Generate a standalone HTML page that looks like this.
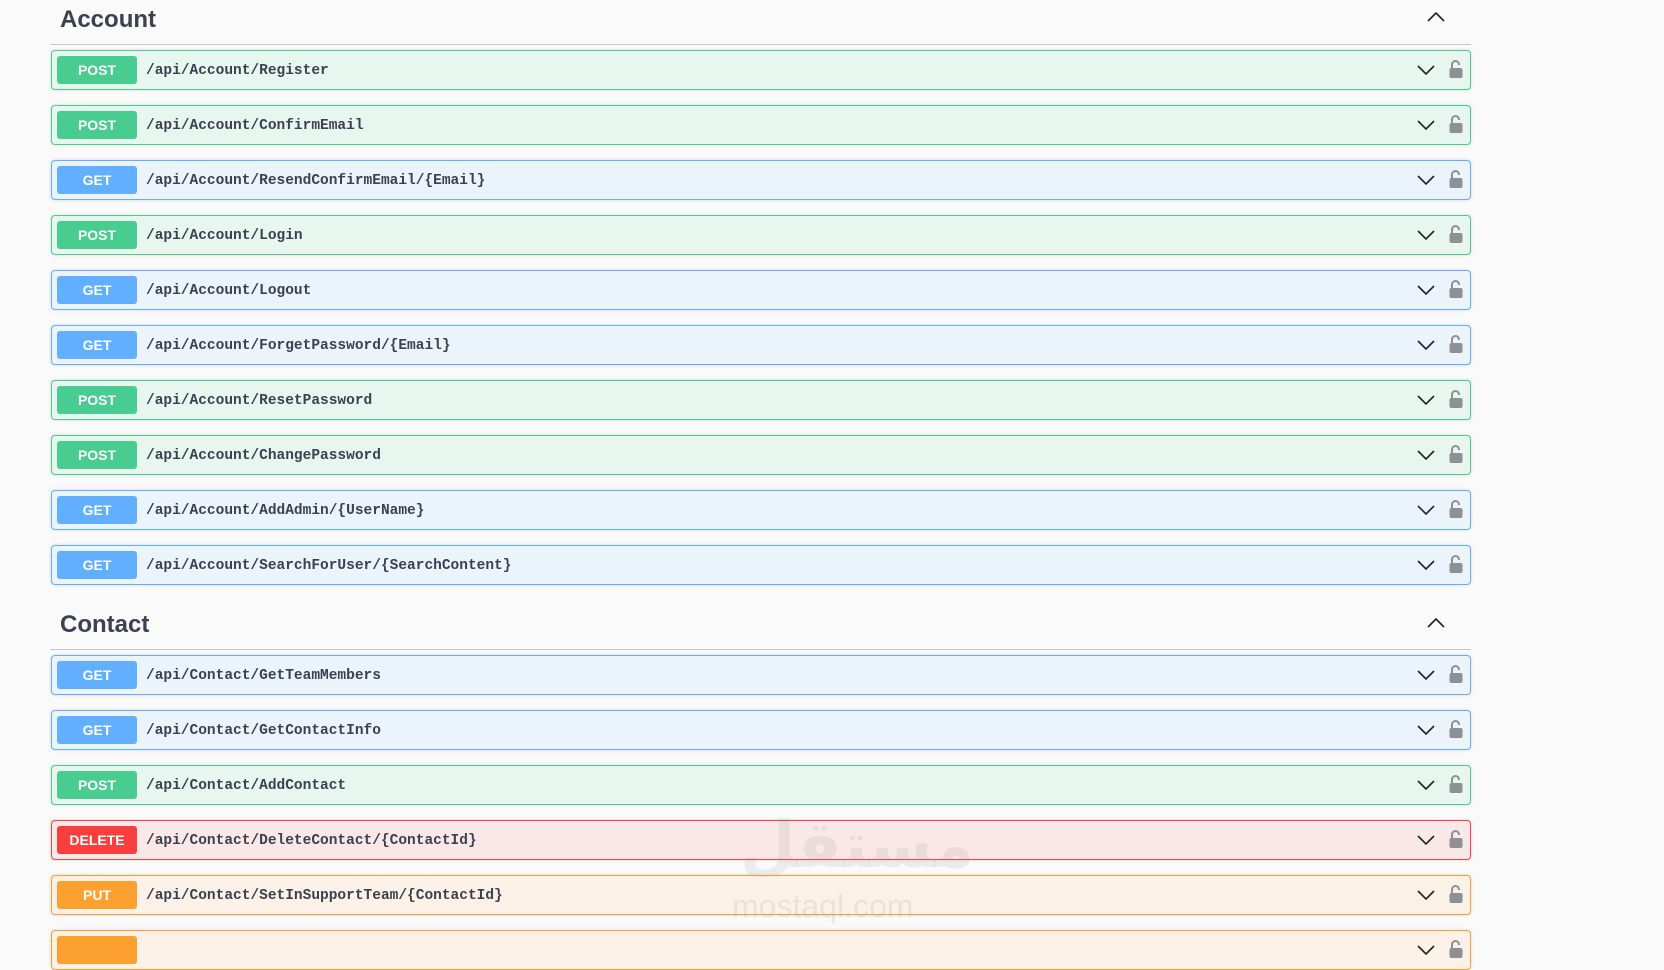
<!DOCTYPE html>
<html><head><meta charset="utf-8"><style>
*{margin:0;padding:0;box-sizing:border-box}
body{width:1664px;height:943px;background:#fafafa;position:relative;overflow:hidden;font-family:"Liberation Sans",sans-serif;color:#3b4151}
.h{position:absolute;left:60px;font-size:24px;font-weight:bold;color:#3b4151}
.line{position:absolute;left:50px;width:1421px;height:1px;background:#c4c6cc}
.up{position:absolute;left:1426px}
.row{position:absolute;left:51px;width:1420px;height:40px;border:1px solid;border-radius:4px;box-shadow:0 0 3px rgba(0,0,0,.15)}
.b{position:absolute;left:5px;top:5px;width:80px;height:28px;border-radius:3px;color:#fff;font-weight:bold;font-size:14px;text-align:center;line-height:28px}
.p{position:absolute;left:94px;top:0;line-height:40px;font-family:"Liberation Mono",monospace;font-weight:bold;font-size:14.5px;color:#3b4151}
.ch{position:absolute;left:1364px;top:12px}
.lk{position:absolute;left:1396px;top:8px}
.post{background:#e8f6f0;border-color:#49cc90}.post .b{background:#49cc90}
.get{background:#ebf3fb;border-color:#61affe}.get .b{background:#61affe}
.del{background:#fae7e7;border-color:#f93e3e}.del .b{background:#f93e3e}
.put{background:#fbf1e6;border-color:#fca130}.put .b{background:#fca130}
.wm{position:absolute;left:732px;top:888px;font-size:32px;color:rgba(150,150,150,.16)}
.wa{position:absolute;left:740px;top:808px;font-size:64px;font-weight:bold;color:rgba(150,150,150,.14);font-family:"Liberation Sans","DejaVu Sans",sans-serif}
</style></head><body>
<div class="h" style="top:6px">Account</div>
<svg class="up" style="top:10px" width="20" height="14" viewBox="0 0 20 14"><path d="M2 11 L10 3 L18 11" fill="none" stroke="#222" stroke-width="1.6"/></svg>
<div class="line" style="top:44px"></div>
<div class="h" style="top:611px">Contact</div>
<svg class="up" style="top:616px" width="20" height="14" viewBox="0 0 20 14"><path d="M2 11 L10 3 L18 11" fill="none" stroke="#222" stroke-width="1.6"/></svg>
<div class="line" style="top:649px"></div>

<div class="row post" style="top:50px"><div class="b">POST</div><div class="p">/api/Account/Register</div></div>
<div class="row post" style="top:105px"><div class="b">POST</div><div class="p">/api/Account/ConfirmEmail</div></div>
<div class="row get" style="top:160px"><div class="b">GET</div><div class="p">/api/Account/ResendConfirmEmail/{Email}</div></div>
<div class="row post" style="top:215px"><div class="b">POST</div><div class="p">/api/Account/Login</div></div>
<div class="row get" style="top:270px"><div class="b">GET</div><div class="p">/api/Account/Logout</div></div>
<div class="row get" style="top:325px"><div class="b">GET</div><div class="p">/api/Account/ForgetPassword/{Email}</div></div>
<div class="row post" style="top:380px"><div class="b">POST</div><div class="p">/api/Account/ResetPassword</div></div>
<div class="row post" style="top:435px"><div class="b">POST</div><div class="p">/api/Account/ChangePassword</div></div>
<div class="row get" style="top:490px"><div class="b">GET</div><div class="p">/api/Account/AddAdmin/{UserName}</div></div>
<div class="row get" style="top:545px"><div class="b">GET</div><div class="p">/api/Account/SearchForUser/{SearchContent}</div></div>
<div class="row get" style="top:655px"><div class="b">GET</div><div class="p">/api/Contact/GetTeamMembers</div></div>
<div class="row get" style="top:710px"><div class="b">GET</div><div class="p">/api/Contact/GetContactInfo</div></div>
<div class="row post" style="top:765px"><div class="b">POST</div><div class="p">/api/Contact/AddContact</div></div>
<div class="row del" style="top:820px"><div class="b">DELETE</div><div class="p">/api/Contact/DeleteContact/{ContactId}</div></div>
<div class="row put" style="top:875px"><div class="b">PUT</div><div class="p">/api/Contact/SetInSupportTeam/{ContactId}</div></div>
<div class="row put" style="top:930px"><div class="b"></div></div>
<div class="wa">مستقل</div>
<div class="wm">mostaql.com</div>
<script>
document.querySelectorAll('.row').forEach(r=>{
r.insertAdjacentHTML('beforeend','<svg class="ch" width="20" height="14" viewBox="0 0 20 14"><path d="M2 3 L10 11 L18 3" fill="none" stroke="#222" stroke-width="1.6"/></svg><svg class="lk" width="16" height="20" viewBox="0 0 16 20"><path d="M4 9 V5.5 A3.5 3.5 0 0 1 11 5.5 V6" fill="none" stroke="#8e9193" stroke-width="2"/><rect x="1.5" y="9" width="13" height="10" rx="2" fill="#8e9193"/></svg>');});
</script>
</body></html>
